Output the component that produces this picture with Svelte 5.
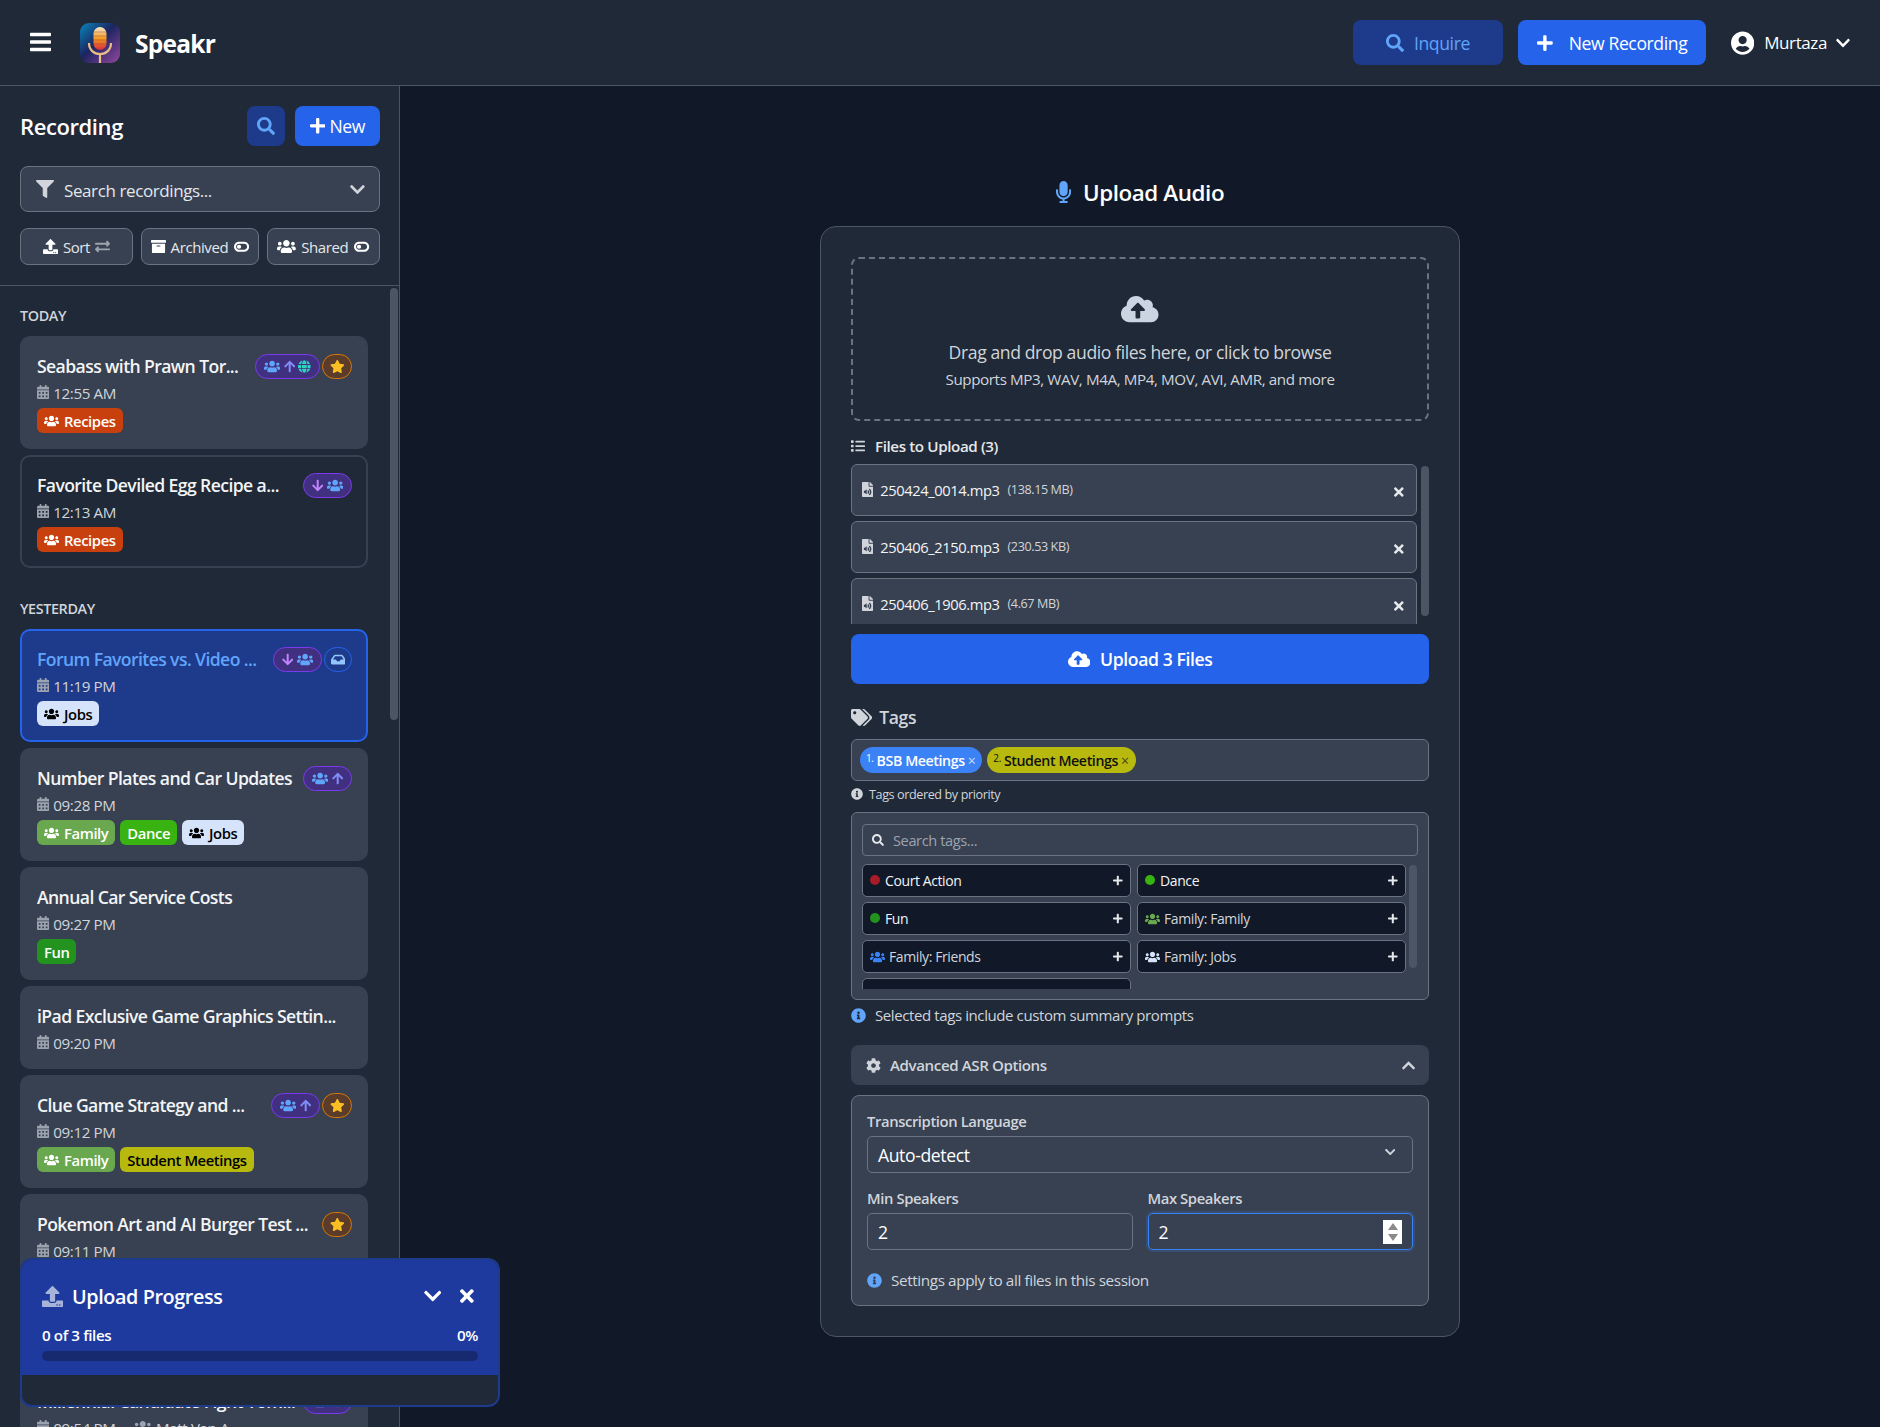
<script>
	const icons = {
		search: [512, 'M505 442.7L405.3 343c-4.5-4.5-10.6-7-17-7H372c27.6-35.3 44-79.7 44-128C416 93.1 322.9 0 208 0S0 93.1 0 208s93.1 208 208 208c48.3 0 92.7-16.4 128-44v16.3c0 6.4 2.5 12.5 7 17l99.7 99.7c9.4 9.4 24.6 9.4 33.9 0l28.3-28.3c9.4-9.4 9.4-24.6.1-34zM208 336c-70.7 0-128-57.2-128-128 0-70.7 57.2-128 128-128 70.7 0 128 57.2 128 128 0 70.7-57.2 128-128 128z'],
		plus: [448, 'M416 208H272V64c0-17.67-14.33-32-32-32h-32c-17.67 0-32 14.33-32 32v144H32c-17.67 0-32 14.33-32 32v32c0 17.67 14.33 32 32 32h144v144c0 17.67 14.33 32 32 32h32c17.67 0 32-14.33 32-32V304h144c17.67 0 32-14.33 32-32v-32c0-17.67-14.33-32-32-32z'],
		filter: [512, 'M487.976 0H24.028C2.71 0-8.047 25.866 7.058 40.971L192 225.941V432c0 7.831 3.821 15.17 10.237 19.662l80 55.98C298.02 518.69 320 507.493 320 487.98V225.941l184.947-184.97C520.021 25.896 509.338 0 487.976 0z'],
		users: [640, 'M96 224c35.3 0 64-28.7 64-64s-28.7-64-64-64-64 28.7-64 64 28.7 64 64 64zm448 0c35.3 0 64-28.7 64-64s-28.7-64-64-64-64 28.7-64 64 28.7 64 64 64zm32 32h-64c-17.6 0-33.5 7.1-45.1 18.6 40.3 22.1 68.9 62 75.1 109.4h66c17.7 0 32-14.3 32-32v-32c0-35.3-28.7-64-64-64zm-256 0c61.9 0 112-50.1 112-112S381.9 32 320 32 208 82.1 208 144s50.1 112 112 112zm76.8 32h-8.3c-20.8 10-43.9 16-68.5 16s-47.6-6-68.5-16h-8.3C179.6 288 128 339.6 128 403.2V432c0 26.5 21.5 48 48 48h288c26.5 0 48-21.5 48-48v-28.8c0-63.6-51.6-115.2-115.2-115.2zm-223.7-13.4C161.5 263.1 145.6 256 128 256H64c-35.3 0-64 28.7-64 64v32c0 17.7 14.3 32 32 32h65.9c6.3-47.4 34.9-87.3 75.2-109.4z'],
		star: [576, 'M259.3 17.8L194 150.2 47.9 171.5c-26.2 3.8-36.7 36.1-17.7 54.6l105.7 103-25 145.5c-4.5 26.3 23.2 46 46.4 33.7L288 439.6l130.7 68.7c23.2 12.2 50.9-7.4 46.4-33.7l-25-145.5 105.7-103c19-18.5 8.5-50.8-17.7-54.6L382 150.2 316.7 17.8c-11.7-23.6-45.6-23.9-57.4 0z'],
		times: [352, 'M242.72 256l100.07-100.07c12.28-12.28 12.28-32.19 0-44.48l-22.24-22.24c-12.28-12.28-32.19-12.28-44.48 0L176 189.28 75.93 89.21c-12.28-12.28-32.19-12.28-44.48 0L9.21 111.45c-12.28 12.28-12.28 32.19 0 44.48L109.28 256 9.21 356.07c-12.28 12.28-12.28 32.19 0 44.48l22.24 22.24c12.28 12.28 32.2 12.28 44.48 0L176 322.72l100.07 100.07c12.28 12.28 32.2 12.28 44.48 0l22.24-22.24c12.28-12.28 12.28-32.19 0-44.48L242.72 256z'],
		down: [448, 'M207.029 381.476L12.686 187.132c-9.373-9.373-9.373-24.569 0-33.941l22.667-22.667c9.357-9.357 24.522-9.375 33.901-.04L224 284.505l154.745-154.021c9.379-9.335 24.544-9.317 33.901.04l22.667 22.667c9.373 9.373 9.373 24.569 0 33.941L240.971 381.476c-9.373 9.372-24.569 9.372-33.942 0z'],
		up: [448, 'M240.971 130.524l194.343 194.343c9.373 9.373 9.373 24.569 0 33.941l-22.667 22.667c-9.357 9.357-24.522 9.375-33.901.04L224 227.495 69.255 381.516c-9.379 9.335-24.544 9.317-33.901-.04l-22.667-22.667c-9.373-9.373-9.373-24.569 0-33.941L207.03 130.525c9.372-9.373 24.568-9.373 33.941-.001z'],
		bars: [448, 'M16 132h416c8.837 0 16-7.163 16-16V76c0-8.837-7.163-16-16-16H16C7.163 60 0 67.163 0 76v40c0 8.837 7.163 16 16 16zm0 160h416c8.837 0 16-7.163 16-16v-40c0-8.837-7.163-16-16-16H16c-8.837 0-16 7.163-16 16v40c0 8.837 7.163 16 16 16zm0 160h416c8.837 0 16-7.163 16-16v-40c0-8.837-7.163-16-16-16H16c-8.837 0-16 7.163-16 16v40c0 8.837 7.163 16 16 16z'],
		user: [496, 'M248 8C111 8 0 119 0 256s111 248 248 248 248-111 248-248S385 8 248 8zm0 96c48.6 0 88 39.4 88 88s-39.4 88-88 88-88-39.4-88-88 39.4-88 88-88zm0 344c-58.7 0-111.3-26.6-146.5-68.2 18.8-35.4 55.6-59.8 98.5-59.8 2.4 0 4.8.4 7.1 1.1 13 4.2 26.6 6.9 40.9 6.9 14.3 0 28-2.7 40.9-6.9 2.3-.7 4.7-1.1 7.1-1.1 42.9 0 79.7 24.4 98.5 59.8C359.3 421.4 306.7 448 248 448z'],
		info: [512, 'M256 8C119.043 8 8 119.083 8 256c0 136.997 111.043 248 248 248s248-111.003 248-248C504 119.083 392.957 8 256 8zm0 110c23.196 0 42 18.804 42 42s-18.804 42-42 42-42-18.804-42-42 18.804-42 42-42zm56 254c0 6.627-5.373 12-12 12h-88c-6.627 0-12-5.373-12-12v-24c0-6.627 5.373-12 12-12h12v-64h-12c-6.627 0-12-5.373-12-12v-24c0-6.627 5.373-12 12-12h64c6.627 0 12 5.373 12 12v100h12c6.627 0 12 5.373 12 12v24z'],
		mic: [352, 'M176 352c53.02 0 96-42.98 96-96V96c0-53.02-42.98-96-96-96S80 42.98 80 96v160c0 53.02 42.98 96 96 96zm160-160h-16c-8.84 0-16 7.16-16 16v48c0 74.8-64.49 134.82-140.79 127.38C96.71 376.89 48 317.11 48 250.3V208c0-8.84-7.16-16-16-16H16c-8.84 0-16 7.16-16 16v40.16c0 89.64 63.97 169.55 152 181.69V464H96c-8.84 0-16 7.16-16 16v16c0 8.84 7.16 16 16 16h160c8.84 0 16-7.16 16-16v-16c0-8.84-7.16-16-16-16h-56v-33.77C285.71 418.47 352 344.9 352 256v-48c0-8.84-7.16-16-16-16z'],
		cloud: [640, 'M537.6 226.6c4.1-10.7 6.4-22.4 6.4-34.6 0-53-43-96-96-96-19.7 0-38.1 6-53.3 16.2C367 64.2 315.3 32 256 32c-88.4 0-160 71.6-160 160 0 2.7.1 5.4.2 8.1C40.2 219.8 0 273.2 0 336c0 79.5 64.5 144 144 144h368c70.7 0 128-57.3 128-128 0-61.9-44-113.6-102.4-125.4zM393.4 288H328v112c0 8.8-7.2 16-16 16h-48c-8.8 0-16-7.2-16-16V288h-65.4c-14.3 0-21.4-17.2-11.3-27.3l105.4-105.4c6.2-6.2 16.4-6.2 22.6 0l105.4 105.4c10.1 10.1 2.9 27.3-11.3 27.3z'],
		upload: [512, 'M296 384h-80c-13.3 0-24-10.7-24-24V192h-87.7c-17.8 0-26.7-21.5-14.1-34.1L242.3 5.7c7.5-7.5 19.8-7.5 27.3 0l152.2 152.2c12.6 12.6 3.7 34.1-14.1 34.1H320v168c0 13.3-10.7 24-24 24zm216-8v112c0 13.3-10.7 24-24 24H24c-13.3 0-24-10.7-24-24V376c0-13.3 10.7-24 24-24h136v8c0 30.9 25.1 56 56 56h80c30.9 0 56-25.1 56-56v-8h136c13.3 0 24 10.7 24 24zm-124 88c0-11-9-20-20-20s-20 9-20 20 9 20 20 20 20-9 20-20zm64 0c0-11-9-20-20-20s-20 9-20 20 9 20 20 20 20-9 20-20z'],
		arrowUp: [448, 'M34.9 289.5l-22.2-22.2c-9.4-9.4-9.4-24.6 0-33.9L207 39c9.4-9.4 24.6-9.4 33.9 0l194.3 194.3c9.4 9.4 9.4 24.6 0 33.9L413 289.4c-9.5 9.5-25 9.3-34.3-.4L264 168.6V456c0 13.3-10.7 24-24 24h-32c-13.3 0-24-10.7-24-24V168.6L69.2 289.1c-9.3 9.8-24.8 10-34.3.4z'],
		arrowDown: [448, 'M413.1 222.5l22.2 22.2c9.4 9.4 9.4 24.6 0 33.9L241 473c-9.4 9.4-24.6 9.4-33.9 0L12.7 278.6c-9.4-9.4-9.4-24.6 0-33.9l22.2-22.2c9.5-9.5 25-9.3 34.3.4L184 343.4V56c0-13.3 10.7-24 24-24h32c13.3 0 24 10.7 24 24v287.4l114.8-120.5c9.3-9.8 24.8-10 34.3-.4z'],
		exchange: [512, 'M0 168v-16c0-13.255 10.745-24 24-24h360V80c0-21.367 25.899-32.042 40.971-16.971l80 80c9.372 9.373 9.372 24.569 0 33.941l-80 80C409.956 271.982 384 261.456 384 240v-48H24c-13.255 0-24-10.745-24-24zm488 152H128v-48c0-21.314-25.862-32.08-40.971-16.971l-80 80c-9.372 9.373-9.372 24.569 0 33.941l80 80C102.057 463.997 128 453.437 128 432v-48h360c13.255 0 24-10.745 24-24v-16c0-13.255-10.745-24-24-24z'],
		archive: [512, 'M32 448c0 17.7 14.3 32 32 32h384c17.7 0 32-14.3 32-32V160H32v288zm160-212c0-6.6 5.4-12 12-12h104c6.6 0 12 5.4 12 12v8c0 6.6-5.4 12-12 12H204c-6.6 0-12-5.4-12-12v-8zM480 32H32C14.3 32 0 46.3 0 64v48c0 8.8 7.2 16 16 16h480c8.8 0 16-7.2 16-16V64c0-17.7-14.3-32-32-32z'],
		toggle: [576, 'M384 64H192C86 64 0 150 0 256s86 192 192 192h192c106 0 192-86 192-192S490 64 384 64zm0 80c62 0 112 50 112 112s-50 112-112 112H192c-62 0-112-50-112-112s50-112 112-112zM192 176a80 80 0 1 1 0 160a80 80 0 1 1 0-160z'],
		calendar: [448, 'M0 464c0 26.5 21.5 48 48 48h352c26.5 0 48-21.5 48-48V192H0v272zm320-196c0-6.6 5.4-12 12-12h40c6.6 0 12 5.4 12 12v40c0 6.6-5.4 12-12 12h-40c-6.6 0-12-5.4-12-12v-40zm0 128c0-6.6 5.4-12 12-12h40c6.6 0 12 5.4 12 12v40c0 6.6-5.4 12-12 12h-40c-6.6 0-12-5.4-12-12v-40zM192 268c0-6.6 5.4-12 12-12h40c6.6 0 12 5.4 12 12v40c0 6.6-5.4 12-12 12h-40c-6.6 0-12-5.4-12-12v-40zm0 128c0-6.6 5.4-12 12-12h40c6.6 0 12 5.4 12 12v40c0 6.6-5.4 12-12 12h-40c-6.6 0-12-5.4-12-12v-40zM64 268c0-6.6 5.4-12 12-12h40c6.6 0 12 5.4 12 12v40c0 6.6-5.4 12-12 12H76c-6.6 0-12-5.4-12-12v-40zm0 128c0-6.6 5.4-12 12-12h40c6.6 0 12 5.4 12 12v40c0 6.6-5.4 12-12 12H76c-6.6 0-12-5.4-12-12v-40zM400 64h-48V16c0-8.8-7.2-16-16-16h-32c-8.8 0-16 7.2-16 16v48H160V16c0-8.8-7.2-16-16-16h-32c-8.8 0-16 7.2-16 16v48H48C21.5 64 0 85.5 0 112v48h448v-48c0-26.5-21.5-48-48-48z'],
		inbox: [576, 'M567.938 243.908L462.25 85.374A48.003 48.003 0 0 0 422.311 64H153.689a48 48 0 0 0-39.938 21.374L8.062 243.908A47.994 47.994 0 0 0 0 270.533V400c0 26.51 21.49 48 48 48h480c26.51 0 48-21.49 48-48V270.533a47.994 47.994 0 0 0-8.062-26.625zM162.252 128h251.497l85.333 128H376l-32 64H232l-32-64H76.918l85.334-128z'],
		globe: [496, 'M336.5 160C322 70.7 287.8 8 248 8s-74 62.7-88.5 152h177zM152 256c0 22.2 1.2 43.5 3.3 64h185.3c2.1-20.5 3.3-41.8 3.3-64s-1.2-43.5-3.3-64H155.3c-2.1 20.5-3.3 41.8-3.3 64zm324.7-96c-28.6-67.9-86.5-120.4-158-141.6 24.4 33.8 41.2 84.7 50 141.6h108zM177.2 18.4C105.8 39.6 47.8 92.1 19.3 160h108c8.7-56.9 25.5-107.8 49.9-141.6zM487.4 192H372.7c2.1 21 3.3 42.5 3.3 64s-1.2 43-3.3 64h114.6c5.5-20.5 8.6-41.8 8.6-64s-3.1-43.5-8.5-64zM120 256c0-21.5 1.2-43 3.3-64H8.6C3.2 212.5 0 233.8 0 256s3.2 43.5 8.6 64h114.6c-2-21-3.2-42.5-3.2-64zm39.5 96c14.5 89.3 48.7 152 88.5 152s74-62.7 88.5-152h-177zm159.3 141.6c71.4-21.2 129.4-73.7 158-141.6h-108c-8.8 56.9-25.6 107.8-50 141.6zM19.3 352c28.6 67.9 86.5 120.4 158 141.6-24.4-33.8-41.2-84.7-50-141.6h-108z'],
		list: [512, 'M80 368H16a16 16 0 0 0-16 16v64a16 16 0 0 0 16 16h64a16 16 0 0 0 16-16v-64a16 16 0 0 0-16-16zm0-320H16A16 16 0 0 0 0 64v64a16 16 0 0 0 16 16h64a16 16 0 0 0 16-16V64a16 16 0 0 0-16-16zm0 160H16a16 16 0 0 0-16 16v64a16 16 0 0 0 16 16h64a16 16 0 0 0 16-16v-64a16 16 0 0 0-16-16zm416 176H176a16 16 0 0 0-16 16v32a16 16 0 0 0 16 16h320a16 16 0 0 0 16-16v-32a16 16 0 0 0-16-16zm0-320H176a16 16 0 0 0-16 16v32a16 16 0 0 0 16 16h320a16 16 0 0 0 16-16V80a16 16 0 0 0-16-16zm0 160H176a16 16 0 0 0-16 16v32a16 16 0 0 0 16 16h320a16 16 0 0 0 16-16v-32a16 16 0 0 0-16-16z'],
		file: [384, 'M224 136V0H24C10.7 0 0 10.7 0 24v464c0 13.3 10.7 24 24 24h336c13.3 0 24-10.7 24-24V160H248c-13.2 0-24-10.8-24-24zm-64 268c0 10.7-12.9 16-20.5 8.5L104 376H76c-6.6 0-12-5.4-12-12v-56c0-6.6 5.4-12 12-12h28l35.5-36.5c7.6-7.6 20.5-2.2 20.5 8.5v136zm33.2-47.6c9.1-9.3 9.1-24.1 0-33.4-22.1-22.8 12.2-56.2 34.4-33.5 27.2 27.9 27.2 72.4 0 100.4-21.8 22.3-56.9-10.4-34.4-33.5zm86-117.1c54.4 55.9 54.4 144.8 0 200.8-21.8 22.4-57-10.3-34.4-33.5 36.2-37.2 36.3-96.5 0-133.8-22.1-22.8 12.3-56.3 34.4-33.5zM384 121.9v6.1H256V0h6.1c6.4 0 12.5 2.5 17 7l97.9 98c4.5 4.5 7 10.6 7 16.9z'],
		tags: [640, 'M497.941 225.941L286.059 14.059A48 48 0 0 0 252.118 0H48C21.49 0 0 21.49 0 48v204.118a48 48 0 0 0 14.059 33.941l211.882 211.882c18.744 18.745 49.136 18.746 67.882 0l204.118-204.118c18.745-18.745 18.745-49.137 0-67.882zM112 160c-26.51 0-48-21.49-48-48s21.49-48 48-48 48 21.49 48 48-21.49 48-48 48zm513.941 133.823L421.823 497.941c-18.745 18.745-49.137 18.745-67.882 0l-.36-.36L527.64 323.522c16.999-16.999 26.36-39.6 26.36-63.64s-9.362-46.641-26.36-63.64L331.397 0h48.721a48 48 0 0 1 33.941 14.059l211.882 211.882c18.745 18.745 18.745 49.137 0 67.882z'],
		cog: [512, 'M487.4 315.7l-42.6-24.6c4.3-23.2 4.3-47 0-70.2l42.6-24.6c4.9-2.8 7.1-8.6 5.5-14-11.1-35.6-30-67.8-54.7-94.6-3.8-4.1-10-5.1-14.8-2.3L380.8 110c-17.9-15.4-38.5-27.3-60.8-35.1V25.8c0-5.6-3.9-10.5-9.4-11.7-36.7-8.2-74.3-7.8-109.2 0-5.5 1.2-9.4 6.1-9.4 11.7V75c-22.2 7.9-42.8 19.8-60.8 35.1L88.7 85.5c-4.9-2.8-11-1.9-14.8 2.3-24.7 26.7-43.6 58.9-54.7 94.6-1.7 5.4.6 11.2 5.5 14L67.3 221c-4.3 23.2-4.3 47 0 70.2l-42.6 24.6c-4.9 2.8-7.1 8.6-5.5 14 11.1 35.6 30 67.8 54.7 94.6 3.8 4.1 10 5.1 14.8 2.3l42.6-24.6c17.9 15.4 38.5 27.3 60.8 35.1v49.2c0 5.6 3.9 10.5 9.4 11.7 36.7 8.2 74.3 7.8 109.2 0 5.5-1.2 9.4-6.1 9.4-11.7v-49.2c22.2-7.9 42.8-19.8 60.8-35.1l42.6 24.6c4.9 2.8 11 1.9 14.8-2.3 24.7-26.7 43.6-58.9 54.7-94.6 1.5-5.5-.7-11.3-5.6-14.1zM256 336c-44.1 0-80-35.9-80-80s35.9-80 80-80 80 35.9 80 80-35.9 80-80 80z']
	};

	const family = { name: 'Family', bg: '#6aa84f', color: '#fff', users: true };
	const jobs = { name: 'Jobs', bg: '#d5e3fb', color: '#000', users: true };
	const recipes = { name: 'Recipes', bg: '#c9400f', color: '#fff', users: true };

	const groups = [
		{
			label: 'Today',
			items: [
				{ title: 'Seabass with Prawn Tor...', time: '12:55 AM', share: ['users', 'arrowUp', 'globe'], star: true, tags: [recipes] },
				{ title: 'Favorite Deviled Egg Recipe a...', time: '12:13 AM', share: ['arrowDown', 'users'], tags: [recipes], outline: true }
			]
		},
		{
			label: 'Yesterday',
			items: [
				{ title: 'Forum Favorites vs. Video ...', time: '11:19 PM', share: ['arrowDown', 'users'], inbox: true, tags: [jobs], active: true },
				{ title: 'Number Plates and Car Updates', time: '09:28 PM', share: ['users', 'arrowUp'], tags: [family, { name: 'Dance', bg: '#38b312', color: '#fff' }, jobs] },
				{ title: 'Annual Car Service Costs', time: '09:27 PM', tags: [{ name: 'Fun', bg: '#23931f', color: '#fff' }] },
				{ title: 'iPad Exclusive Game Graphics Settin...', time: '09:20 PM' },
				{ title: 'Clue Game Strategy and ...', time: '09:12 PM', share: ['users', 'arrowUp'], star: true, tags: [family, { name: 'Student Meetings', bg: '#b8b90f', color: '#000' }] },
				{ title: 'Pokemon Art and AI Burger Test ...', time: '09:11 PM', star: true, tags: [] }
			]
		},
		{
			items: [
				{ title: 'Millennial Candidate Fight Tom...', time: '09:54 PM', share: ['users', 'arrowUp'], owner: 'Matt Van A...' }
			]
		}
	];

	const files = [
		{ name: '250424_0014.mp3', size: '(138.15 MB)' },
		{ name: '250406_2150.mp3', size: '(230.53 KB)' },
		{ name: '250406_1906.mp3', size: '(4.67 MB)' }
	];

	const pickTags = [
		{ name: 'Court Action', dot: '#a61c28' },
		{ name: 'Dance', dot: '#38b312' },
		{ name: 'Fun', dot: '#23931f' },
		{ name: 'Family: Family', users: '#6aa84f' },
		{ name: 'Family: Friends', users: '#3b82f6' },
		{ name: 'Family: Jobs', users: '#d5e3fb' },
		{ name: '', users: '#cc0000' }
	];
</script>

{#snippet icon(name, cls = '')}
	<svg class="ic {cls}" viewBox="0 0 {icons[name][0]} 512" aria-hidden="true"><path fill="currentColor" d={icons[name][1]} /></svg>
{/snippet}

<div class="app">
	<header class="top">
		<div class="brand">
			{@render icon('bars', 'burger')}
			<svg class="logo" viewBox="0 0 40 40" aria-hidden="true">
				<defs>
					<linearGradient id="lg" x1="0" y1="0" x2="1" y2="1">
						<stop offset="0" stop-color="#0a86bd" />
						<stop offset="0.45" stop-color="#1b2560" />
						<stop offset="1" stop-color="#94479f" />
					</linearGradient>
					<linearGradient id="mc" x1="0" y1="0" x2="0" y2="1">
						<stop offset="0" stop-color="#f7e8cf" />
						<stop offset="0.5" stop-color="#f59a23" />
						<stop offset="1" stop-color="#d92b3a" />
					</linearGradient>
				</defs>
				<rect width="40" height="40" rx="9" fill="url(#lg)" />
				<rect x="13.500" y="4" width="13" height="23" rx="6.500" fill="url(#mc)" />
				<path d="M14 9h12M13.500 13h13M13.500 17h13M13.500 21h13" stroke="#7a3b2a" stroke-width="0.700" opacity="0.5" />
				<path d="M9 20c0 7 5 11 11 11s11-4 11-11M20 31v9" fill="none" stroke="#e9bd85" stroke-width="2.200" />
			</svg>
			<span class="brand-name">Speakr</span>
		</div>
		<div class="top-actions">
			<button class="btn inquire">{@render icon('search')}<span>Inquire</span></button>
			<button class="btn record">{@render icon('plus')}<span>New Recording</span></button>
			<div class="who">
				{@render icon('user', 'who-ic')}
				<span>Murtaza</span>
				{@render icon('down', 'who-ch')}
			</div>
		</div>
	</header>

	<div class="body">
		<aside class="side">
			<div class="side-head">
				<div class="side-title">
					<h2>Recording</h2>
					<button class="mini-search">{@render icon('search')}</button>
					<button class="mini-new">{@render icon('plus')}<span>New</span></button>
				</div>
				<div class="searchbox">
					{@render icon('filter', 'sb-filter')}
					<span>Search recordings...</span>
					{@render icon('down', 'sb-ch')}
				</div>
				<div class="filters">
					<button>{@render icon('upload')}<span>Sort</span>{@render icon('exchange', 'dim')}</button>
					<button>{@render icon('archive')}<span>Archived</span>{@render icon('toggle', 'tg')}</button>
					<button>{@render icon('users')}<span>Shared</span>{@render icon('toggle', 'tg')}</button>
				</div>
			</div>

			<div class="list">
				{#each groups as g}
					<section class="group" class:nolabel={!g.label}>
						{#if g.label}
							<h3>{g.label}</h3>
						{/if}
						{#each g.items as r}
							<article class="card" class:outline={r.outline} class:active={r.active}>
								<div class="card-top">
									<span class="card-title">{r.title}</span>
									<span class="badges">
										{#if r.share}
											<span class="badge share">
												{#each r.share as s}
													<span class="share-{s}">{@render icon(s)}</span>
												{/each}
											</span>
										{/if}
										{#if r.star}
											<span class="badge star">{@render icon('star')}</span>
										{/if}
										{#if r.inbox}
											<span class="badge inbox">{@render icon('inbox')}</span>
										{/if}
									</span>
								</div>
								<div class="meta">
									{@render icon('calendar')}
									<span>{r.time}</span>
									{#if r.owner}
										<span class="owner">{@render icon('users')}{r.owner}</span>
									{/if}
								</div>
								{#if r.tags}
									<div class="tags">
										{#each r.tags as t}
											<span class="tag" style="background: {t.bg}; color: {t.color}">
												{#if t.users}{@render icon('users')}{/if}{t.name}
											</span>
										{/each}
									</div>
								{/if}
							</article>
						{/each}
					</section>
				{/each}
			</div>
			<div class="thumb"></div>
		</aside>

		<main class="main">
			<h1 class="page-title">{@render icon('mic')}<span>Upload Audio</span></h1>
			<div class="panel">
				<div class="drop">
					{@render icon('cloud')}
					<p class="drop-main">Drag and drop audio files here, or click to browse</p>
					<p class="drop-sub">Supports MP3, WAV, M4A, MP4, MOV, AVI, AMR, and more</p>
				</div>

				<div class="files-head">{@render icon('list')}<span>Files to Upload (3)</span></div>
				<div class="files">
					{#each files as f}
						<div class="file">
							{@render icon('file', 'file-ic')}
							<span class="file-name">{f.name}</span>
							<span class="file-size">{f.size}</span>
							{@render icon('times', 'file-x')}
						</div>
					{/each}
					<div class="files-thumb"></div>
				</div>

				<button class="go">{@render icon('cloud')}<span>Upload 3 Files</span></button>

				<div class="tags-head">{@render icon('tags')}<span>Tags</span></div>
				<div class="chosen">
					<span class="pick blue"><sup>1.</sup>BSB Meetings<b>×</b></span>
					<span class="pick olive"><sup>2.</sup>Student Meetings<b>×</b></span>
				</div>
				<div class="order-note">{@render icon('info')}<span>Tags ordered by priority</span></div>

				<div class="picker">
					<div class="tag-search">{@render icon('search')}<span>Search tags...</span></div>
					<div class="chips">
						{#each pickTags as t}
							<div class="chip">
								{#if t.dot}
									<i class="dot" style="background: {t.dot}"></i>
									<span class="chip-plain">{t.name}</span>
								{:else}
									<span class="chip-users" style="color: {t.users}">{@render icon('users')}</span>
									<span class="chip-muted">{t.name}</span>
								{/if}
								{@render icon('plus', 'chip-plus')}
							</div>
						{/each}
					</div>
					<div class="chips-thumb"></div>
				</div>
				<div class="prompt-note">{@render icon('info')}<span>Selected tags include custom summary prompts</span></div>

				<div class="adv-head">
					{@render icon('cog')}
					<span>Advanced ASR Options</span>
					{@render icon('up', 'adv-ch')}
				</div>
				<div class="adv">
					<div class="field-label">Transcription Language</div>
					<div class="select"><span>Auto-detect</span>{@render icon('down')}</div>
					<div class="speakers">
						<div>
							<div class="field-label">Min Speakers</div>
							<div class="num">2</div>
						</div>
						<div>
							<div class="field-label">Max Speakers</div>
							<div class="num focus">
								2
								<span class="spin"><i class="sp-up"></i><i class="sp-down"></i></span>
							</div>
						</div>
					</div>
					<div class="adv-note">{@render icon('info')}<span>Settings apply to all files in this session</span></div>
				</div>
			</div>
		</main>
	</div>

	<div class="progress">
		<div class="prog-top">
			<div class="prog-head">
				{@render icon('upload', 'prog-up')}
				<span class="prog-title">Upload Progress</span>
				{@render icon('down', 'prog-ch')}
				{@render icon('times', 'prog-x')}
			</div>
			<div class="prog-row"><span>0 of 3 files</span><span>0%</span></div>
			<div class="prog-bar"></div>
		</div>
	</div>
</div>

<style>
	:global(body) {
		margin: 0;
		background: #111827;
		font-family: 'Open Sans', 'Noto Sans', sans-serif;
		letter-spacing: -0.025em;
		color: #fff;
	}
	button {
		font: inherit;
		letter-spacing: inherit;
		border: 0;
		color: inherit;
		cursor: pointer;
	}
	h1, h2, h3, p {
		margin: 0;
	}
	.ic {
		height: 1em;
		display: inline-block;
		flex: none;
	}

	.app {
		height: 1427px;
		overflow: hidden;
		display: flex;
		flex-direction: column;
		position: relative;
	}

	/* top bar */
	.top {
		height: 85px;
		flex: none;
		background: #1f2937;
		border-bottom: 1px solid #4b5563;
		display: flex;
		align-items: center;
		justify-content: space-between;
		padding: 0 30px 0 30px;
	}
	.brand {
		display: flex;
		align-items: center;
	}
	.brand :global(.burger) {
		font-size: 24px;
		width: 21px;
		margin-top: -1px;
	}
	.logo {
		width: 40px;
		height: 40px;
		margin-left: 29px;
	}
	.brand-name {
		font-size: 24.5px;
		font-weight: 700;
		margin: 2px 0 0 15px;
		letter-spacing: -0.03em;
	}
	.top-actions {
		display: flex;
		align-items: center;
		gap: 15px;
	}
	.btn {
		height: 45px;
		border-radius: 8px;
		display: flex;
		align-items: center;
		font-size: 17.6px;
	}
	.inquire {
		width: 150px;
		background: #1e3a8a;
		color: #60a5fa;
		padding: 0 0 0 33px;
		gap: 10px;
	}
	.inquire :global(.ic) {
		font-size: 18px;
	}
	.record {
		width: 188px;
		background: #2563eb;
		padding: 0 0 0 19px;
		gap: 16px;
	}
	.record :global(.ic) {
		font-size: 18px;
	}
	.who {
		display: flex;
		align-items: center;
		font-size: 17px;
		margin-left: 10px;
	}
	.who :global(.who-ic) {
		font-size: 24px;
		margin-right: 10px;
	}
	.who :global(.who-ch) {
		font-size: 16px;
		margin-left: 9px;
	}

	.body {
		flex: 1;
		min-height: 0;
		display: flex;
	}

	/* sidebar */
	.side {
		width: 399px;
		flex: none;
		background: #1f2937;
		border-right: 1px solid #4b5563;
		display: flex;
		flex-direction: column;
		position: relative;
		overflow: hidden;
	}
	.side-head {
		padding: 20px 20px 20px;
		border-bottom: 1px solid #4b5563;
		margin-right: -1px;
	}
	.side-title {
		display: flex;
		align-items: center;
		height: 40px;
	}
	.side-title h2 {
		font-size: 22px;
		font-weight: 600;
		flex: 1;
	}
	.mini-search {
		width: 38px;
		height: 40px;
		border-radius: 8px;
		background: #1e3a8a;
		color: #60a5fa;
		font-size: 18px;
		display: flex;
		align-items: center;
		justify-content: center;
		padding: 0;
	}
	.mini-new {
		width: 85px;
		height: 40px;
		margin-left: 10px;
		border-radius: 8px;
		background: #2563eb;
		font-size: 17.6px;
		display: flex;
		align-items: center;
		justify-content: center;
		gap: 4px;
		padding: 0;
	}
	.searchbox {
		margin-top: 20px;
		height: 46px;
		box-sizing: border-box;
		border: 1px solid #6b7280;
		border-radius: 8px;
		background: #374151;
		display: flex;
		align-items: center;
		padding: 2px 14px 0 15px;
		font-size: 17px;
		color: #e5e7eb;
	}
	.searchbox span {
		flex: 1;
		margin-left: 10px;
	}
	.searchbox :global(.sb-filter) {
		font-size: 18px;
		color: #d1d5db;
		margin-top: -3px;
	}
	.searchbox :global(.sb-ch) {
		font-size: 17px;
		color: #d1d5db;
		margin-top: -2px;
	}
	.filters {
		margin-top: 16px;
		display: grid;
		grid-template-columns: 113px 118px 1fr;
		gap: 8px;
	}
	.filters button {
		height: 37px;
		box-sizing: border-box;
		background: #374151;
		border: 1px solid #6b7280;
		border-radius: 8px;
		display: flex;
		align-items: center;
		justify-content: center;
		gap: 5px;
		font-size: 15px;
		color: #e5e7eb;
		padding: 0;
	}
	.filters :global(.ic) {
		font-size: 15px;
		color: #fff;
	}
	.filters :global(.dim) {
		color: #9ca3af;
	}
	.filters :global(.tg) {
		font-size: 13.5px;
		margin-left: 1px;
	}

	.list {
		flex: 1;
		min-height: 0;
		overflow: hidden;
		padding: 20px 31px 0 20px;
	}
	.group {
		margin-bottom: 31px;
	}
	.group.nolabel {
		padding-top: 33px;
	}
	.group h3 {
		font-size: 14.4px;
		line-height: 20px;
		font-weight: 600;
		color: #d1d5db;
		text-transform: uppercase;
		margin-bottom: 10px;
	}
	.card {
		background: #374151;
		border: 2px solid #374151;
		border-radius: 10px;
		padding: 15px 14px 13px 15px;
		margin-bottom: 6px;
		box-sizing: border-box;
	}
	.card.outline {
		background: transparent;
	}
	.card.active {
		background: #1e3a8a;
		border-color: #2563eb;
	}
	.card.active .card-title {
		color: #60a5fa;
	}
	.card-top {
		display: flex;
		align-items: center;
		justify-content: space-between;
		height: 26px;
	}
	.card-title {
		font-size: 17.6px;
		font-weight: 600;
		white-space: nowrap;
		color: #f3f4f6;
		letter-spacing: -0.034em;
	}
	.badges {
		display: flex;
		gap: 2px;
		flex: none;
	}
	.badge {
		height: 25px;
		box-sizing: border-box;
		border-radius: 13px;
		display: flex;
		align-items: center;
		justify-content: center;
		font-size: 13px;
	}
	.badge.share {
		background: #40307f;
		border: 1px solid #7c3aed;
		padding: 0 8px;
		gap: 3.5px;
	}
	.badge.share :global(.ic) {
		display: block;
	}
	.share-users {
		color: #60a5fa;
	}
	.share-arrowUp {
		color: #818cf8;
	}
	.share-arrowDown {
		color: #c084fc;
	}
	.share-globe {
		color: #2dd4bf;
	}
	.badge.star {
		width: 30px;
		background: #5b3b2a;
		border: 1px solid #d97706;
		color: #fbbf24;
	}
	.badge.inbox {
		width: 28px;
		background: #1e3a8a;
		border: 1px solid #2563eb;
		color: #93c5fd;
	}
	.meta {
		height: 22px;
		margin-top: 3px;
		display: flex;
		align-items: center;
		gap: 4px;
		font-size: 15.2px;
		color: #d1d5db;
	}
	.meta :global(.ic) {
		font-size: 14px;
		color: #9ca3af;
		margin-top: -2px;
	}
	.owner {
		display: flex;
		align-items: center;
		gap: 5px;
		margin-left: 14px;
	}
	.tags {
		height: 26px;
		margin-top: 4px;
		display: flex;
		gap: 5px;
	}
	.tag {
		height: 25px;
		border-radius: 6px;
		display: flex;
		align-items: center;
		gap: 5px;
		padding: 0 7px;
		font-size: 14.8px;
		font-weight: 600;
	}
	.tag :global(.ic) {
		font-size: 12px;
	}
	.thumb {
		position: absolute;
		left: 390px;
		top: 202px;
		width: 8px;
		height: 432px;
		border-radius: 4px;
		background: #4b5563;
	}

	/* main column */
	.main {
		flex: 1;
		min-width: 0;
		padding-top: 88px;
	}
	.page-title {
		height: 36px;
		margin-bottom: 16px;
		display: flex;
		align-items: center;
		justify-content: center;
		gap: 12px;
		font-size: 22.4px;
		font-weight: 600;
	}
	.page-title :global(.ic) {
		font-size: 22px;
		color: #60a5fa;
	}
	.panel {
		width: 640px;
		height: 1111px;
		box-sizing: border-box;
		margin: 0 auto;
		background: #1f2937;
		border: 1px solid #4b5563;
		border-radius: 16px;
		padding: 30px;
	}
	.drop {
		height: 164px;
		box-sizing: border-box;
		border: 2px dashed #6b7280;
		border-radius: 8px;
		display: flex;
		flex-direction: column;
		align-items: center;
		padding-top: 35px;
		color: #d1d5db;
	}
	.drop :global(.ic) {
		font-size: 30px;
		color: #cbd5e1;
	}
	.drop-main {
		font-size: 17.6px;
		line-height: 24px;
		margin-top: 16px;
	}
	.drop-sub {
		font-size: 15.2px;
		line-height: 20px;
		margin-top: 5px;
	}
	.files-head {
		margin-top: 14px;
		height: 22px;
		display: flex;
		align-items: center;
		gap: 10px;
		font-size: 15.2px;
		font-weight: 600;
		color: #e5e7eb;
	}
	.files-head :global(.ic) {
		font-size: 14px;
		color: #d1d5db;
	}
	.files {
		height: 160px;
		margin-top: 7px;
		overflow: hidden;
		position: relative;
	}
	.file {
		width: 566px;
		height: 52px;
		box-sizing: border-box;
		background: #374151;
		border: 1px solid #6b7280;
		border-radius: 6px;
		margin-bottom: 5px;
		display: flex;
		align-items: flex-start;
		padding: 15px 12px 0 10px;
		font-size: 14.7px;
		color: #f3f4f6;
		line-height: 20px;
	}
	.file :global(.file-ic) {
		font-size: 15px;
		margin-top: 2px;
		color: #d1d5db;
	}
	.file-name {
		margin-left: 7px;
	}
	.file-size {
		margin-left: 8px;
		font-size: 12.6px;
		color: #d1d5db;
		flex: 1;
	}
	.file :global(.file-x) {
		font-size: 14px;
		margin-top: 5px;
		color: #e5e7eb;
	}
	.files-thumb {
		position: absolute;
		right: 0;
		top: 2px;
		width: 8px;
		height: 150px;
		border-radius: 4px;
		background: #4b5563;
	}
	.go {
		width: 100%;
		height: 50px;
		margin-top: 10px;
		background: #2563eb;
		border-radius: 8px;
		display: flex;
		align-items: center;
		justify-content: center;
		gap: 10px;
		font-size: 17.6px;
		font-weight: 600;
		padding: 0;
	}
	.go :global(.ic) {
		font-size: 18px;
	}
	.tags-head {
		margin-top: 21px;
		margin-bottom: 10px;
		height: 24px;
		display: flex;
		align-items: center;
		gap: 7px;
		font-size: 17.6px;
		font-weight: 600;
		color: #d1d5db;
	}
	.tags-head :global(.ic) {
		font-size: 17px;
	}
	.chosen {
		height: 42px;
		box-sizing: border-box;
		background: #374151;
		border: 1px solid #6b7280;
		border-radius: 6px;
		display: flex;
		align-items: center;
		gap: 5px;
		padding: 0 8px;
	}
	.pick {
		height: 26px;
		border-radius: 13px;
		display: flex;
		align-items: center;
		padding: 0 7px 0 6px;
		font-size: 14.2px;
		font-weight: 600;
	}
	.pick sup {
		font-size: 10px;
		font-weight: 400;
		margin-right: 3px;
		line-height: 1;
		vertical-align: baseline;
		position: relative;
		top: -2px;
	}
	.pick b {
		font-weight: 400;
		margin-left: 3px;
		font-size: 14px;
		opacity: 0.7;
	}
	.pick.blue {
		background: #3b82f6;
	}
	.pick.olive {
		background: #b8b90f;
		color: #111;
	}
	.order-note {
		margin-top: 5px;
		height: 16px;
		display: flex;
		align-items: center;
		gap: 6px;
		font-size: 12.6px;
		color: #d1d5db;
	}
	.order-note :global(.ic) {
		font-size: 12px;
	}
	.picker {
		margin-top: 10px;
		height: 188px;
		box-sizing: border-box;
		background: #374151;
		border: 1px solid #6b7280;
		border-radius: 6px;
		padding: 11px 10px;
		position: relative;
		overflow: hidden;
	}
	.tag-search {
		height: 32px;
		box-sizing: border-box;
		border: 1px solid #6b7280;
		border-radius: 4px;
		display: flex;
		align-items: center;
		gap: 9px;
		padding: 0 9px;
		font-size: 14.6px;
		color: #9ca3af;
	}
	.tag-search :global(.ic) {
		font-size: 12px;
		color: #e5e7eb;
	}
	.chips {
		margin-top: 8px;
		width: 544px;
		height: 125px;
		overflow: hidden;
		display: grid;
		grid-template-columns: 269px 269px;
		grid-auto-rows: 33px;
		gap: 5px 6px;
	}
	.chip {
		background: #111827;
		border: 1px solid #6b7280;
		border-radius: 5px;
		box-sizing: border-box;
		display: flex;
		align-items: center;
		padding: 0 6px 0 7px;
		font-size: 14px;
	}
	.dot {
		width: 10px;
		height: 10px;
		border-radius: 50%;
		margin-right: 5px;
		margin-top: -2px;
		flex: none;
	}
	.chip-users {
		display: flex;
		font-size: 12px;
		margin-right: 4px;
	}
	.chip-plain {
		flex: 1;
		color: #f3f4f6;
	}
	.chip-muted {
		flex: 1;
		color: #d1d5db;
	}
	.chip :global(.chip-plus) {
		font-size: 11px;
		color: #e5e7eb;
		margin-right: 1px;
	}
	.chips-thumb {
		position: absolute;
		right: 11px;
		top: 52px;
		width: 8px;
		height: 103px;
		border-radius: 4px;
		background: #4b5563;
	}
	.prompt-note {
		margin-top: 5px;
		height: 20px;
		display: flex;
		align-items: center;
		gap: 9px;
		font-size: 15px;
		color: #d1d5db;
	}
	.prompt-note :global(.ic),
	.adv-note :global(.ic) {
		font-size: 15px;
		color: #60a5fa;
	}
	.adv-head {
		margin-top: 20px;
		height: 40px;
		box-sizing: border-box;
		background: #374151;
		border-radius: 8px;
		display: flex;
		align-items: center;
		padding: 0 14px 0 15px;
		gap: 9px;
		font-size: 15.1px;
		font-weight: 600;
		color: #d1d5db;
	}
	.adv-head span {
		flex: 1;
	}
	.adv-head :global(.ic) {
		font-size: 15px;
	}
	.adv {
		margin-top: 10px;
		height: 211px;
		box-sizing: border-box;
		background: #374151;
		border: 1px solid #6b7280;
		border-radius: 8px;
		padding: 16px 15px 0;
	}
	.field-label {
		height: 18px;
		line-height: 18px;
		font-size: 14.8px;
		font-weight: 600;
		color: #d1d5db;
		margin-bottom: 6px;
	}
	.select {
		height: 37px;
		box-sizing: border-box;
		border: 1px solid #6b7280;
		border-radius: 5px;
		display: flex;
		align-items: center;
		justify-content: space-between;
		padding: 0 17px 0 10px;
		font-size: 17.6px;
	}
	.select :global(.ic) {
		font-size: 12px;
		color: #d1d5db;
		margin-top: -6px;
	}
	.speakers {
		margin-top: 16px;
		display: grid;
		grid-template-columns: 1fr 1fr;
		gap: 15px;
	}
	.num {
		height: 37px;
		box-sizing: border-box;
		border: 1px solid #6b7280;
		border-radius: 5px;
		display: flex;
		align-items: center;
		justify-content: space-between;
		padding: 0 10px;
		font-size: 17.6px;
	}
	.num.focus {
		border-color: #3b82f6;
		box-shadow: 0 0 0 2px rgba(59, 130, 246, 0.2);
		padding-right: 10px;
	}
	.spin {
		width: 19px;
		height: 24px;
		background: #fff;
		display: flex;
		flex-direction: column;
		align-items: center;
		justify-content: space-between;
		padding: 3px 0;
		box-sizing: border-box;
	}
	.spin i {
		width: 0;
		height: 0;
		border-left: 5.500px solid transparent;
		border-right: 5.500px solid transparent;
	}
	.sp-up {
		border-bottom: 7px solid #8a8a8a;
	}
	.sp-down {
		border-top: 7px solid #8a8a8a;
	}
	.adv-note {
		margin-top: 20px;
		height: 20px;
		display: flex;
		align-items: center;
		gap: 9px;
		font-size: 15.3px;
		color: #d1d5db;
	}

	/* floating upload panel */
	.progress {
		position: absolute;
		left: 20px;
		top: 1258px;
		width: 480px;
		height: 149px;
		box-sizing: border-box;
		background: #1f2937;
		border: 2px solid #1e3a8a;
		border-radius: 12px;
		overflow: hidden;
	}
	.prog-top {
		height: 115px;
		box-sizing: border-box;
		background: #1e3a9f;
		padding: 0 20px;
	}
	.prog-head {
		height: 72px;
		display: flex;
		align-items: center;
	}
	.prog-head :global(.prog-up) {
		font-size: 21px;
		color: #a5b4d8;
		margin-right: 9px;
	}
	.prog-title {
		font-size: 19.8px;
		font-weight: 600;
		flex: 1;
	}
	.prog-head :global(.prog-ch) {
		font-size: 20px;
		margin-right: 19px;
	}
	.prog-head :global(.prog-x) {
		font-size: 20px;
		margin-right: 4px;
	}
	.prog-row {
		display: flex;
		justify-content: space-between;
		font-size: 15.2px;
		font-weight: 600;
		line-height: 20px;
		margin-top: -7px;
	}
	.prog-bar {
		height: 10px;
		margin-top: 6px;
		border-radius: 5px;
		background: #172a6f;
	}
</style>
